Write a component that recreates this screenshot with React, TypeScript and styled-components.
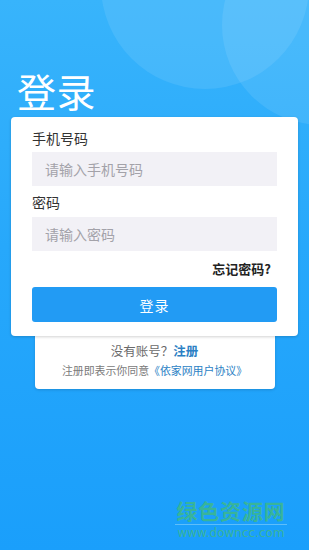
import React from 'react';
import styled, { createGlobalStyle } from 'styled-components';

const GlobalStyle = createGlobalStyle`
  html, body {
    margin: 0;
    padding: 0;
  }
  body {
    font-family: "Noto Sans CJK SC", "Noto Sans", sans-serif;
  }
  * {
    box-sizing: border-box;
  }
`;

const StyledPage = styled.div`
  position: relative;
  width: 309px;
  height: 550px;
  overflow: hidden;
  background: linear-gradient(180deg, #38b4fb 0%, #27a8fb 45%, #1a9ffb 100%);
  padding: 68px 11px 0 11px;
`;

const StyledCircle = styled.div<{ $x: number; $y: number; $r: number }>`
  position: absolute;
  left: ${(p) => p.$x - p.$r}px;
  top: ${(p) => p.$y - p.$r}px;
  width: ${(p) => p.$r * 2}px;
  height: ${(p) => p.$r * 2}px;
  border-radius: 50%;
  background: rgba(255, 255, 255, 0.09);
  pointer-events: none;
`;

const StyledContent = styled.div`
  position: relative;
  display: flex;
  flex-direction: column;
  align-items: center;
`;

const StyledTitle = styled.h1`
  align-self: flex-start;
  margin: 0 0 4px 6px;
  font-size: 39px;
  line-height: 45px;
  font-weight: 400;
  color: #fff;
  letter-spacing: 0.5px;
`;

const StyledCard = styled.div`
  position: relative;
  z-index: 2;
  width: 287px;
  background: #fff;
  border-radius: 4px;
  padding: 11px 21px 14px 21px;
  display: flex;
  flex-direction: column;
  box-shadow: 0 1px 3px rgba(0, 0, 0, 0.18);
`;

const StyledLabel = styled.div<{ $top?: number }>`
  font-size: 14px;
  line-height: 20px;
  color: #333;
  margin-top: ${(p) => p.$top ?? 0}px;
`;

const StyledInput = styled.input<{ $top: number }>`
  margin-top: ${(p) => p.$top}px;
  height: 34px;
  width: 100%;
  border: none;
  outline: none;
  background: #f2f1f6;
  padding: 0 13px;
  font-family: inherit;
  font-size: 14px;
  color: #333;
  &::placeholder {
    color: #a3a2a9;
  }
`;

const StyledForgot = styled.button`
  align-self: flex-end;
  margin: 8px 6px 0 0;
  padding: 0;
  border: none;
  background: transparent;
  font-family: inherit;
  font-size: 13px;
  line-height: 20px;
  font-weight: 700;
  color: #222;
`;

const StyledSubmit = styled.button`
  margin-top: 8px;
  height: 35px;
  width: 100%;
  border: none;
  border-radius: 3px;
  background: #229bf4;
  color: #fff;
  font-family: inherit;
  font-size: 14px;
  letter-spacing: 1px;
`;

const StyledFooterCard = styled.div`
  position: relative;
  z-index: 1;
  width: 240px;
  margin-top: -4px;
  background: #fff;
  border-radius: 0 0 4px 4px;
  padding: 9px 0 10px 0;
  text-align: center;
  box-shadow: 0 1px 3px rgba(0, 0, 0, 0.15);
`;

const StyledRegister = styled.div`
  font-size: 12.5px;
  line-height: 20px;
  color: #6a6a6a;
`;

const StyledTerms = styled.div`
  font-size: 10.9px;
  line-height: 18px;
  color: #7a7a7a;
  white-space: nowrap;
`;

const StyledLink = styled.span<{ $bold?: boolean }>`
  color: #2b7fc4;
  font-weight: ${(p) => (p.$bold ? 700 : 400)};
`;

const StyledWatermark = styled.div`
  position: absolute;
  left: 175px;
  top: 496px;
  width: 112px;
  display: flex;
  flex-direction: column;
  align-items: center;
  color: rgba(70, 190, 110, 0.7);
  pointer-events: none;
`;

const StyledMarkTitle = styled.div`
  font-size: 21px;
  line-height: 28px;
  font-weight: 700;
  letter-spacing: 0.8px;
  width: 100%;
  text-align: center;
  border-bottom: 1px solid rgba(140, 210, 250, 0.6);
`;

const StyledMarkUrl = styled.div`
  margin-top: 1px;
  font-family: "DejaVu Sans", sans-serif;
  font-size: 12px;
  line-height: 15px;
`;

function App() {
  return (
    <StyledPage>
      <GlobalStyle />
      <StyledCircle $x={205} $y={-15} $r={104} />
      <StyledCircle $x={322} $y={25} $r={100} />
      <StyledContent>
        <StyledTitle>登录</StyledTitle>
        <StyledCard>
          <StyledLabel>手机号码</StyledLabel>
          <StyledInput $top={4} placeholder="请输入手机号码" />
          <StyledLabel $top={6}>密码</StyledLabel>
          <StyledInput $top={5} type="password" placeholder="请输入密码" />
          <StyledForgot type="button">忘记密码?</StyledForgot>
          <StyledSubmit type="button">登录</StyledSubmit>
        </StyledCard>
        <StyledFooterCard>
          <StyledRegister>
            没有账号？<StyledLink $bold>注册</StyledLink>
          </StyledRegister>
          <StyledTerms>
            注册即表示你同意<StyledLink>《依家网用户协议》</StyledLink>
          </StyledTerms>
        </StyledFooterCard>
      </StyledContent>
      <StyledWatermark>
        <StyledMarkTitle>绿色资源网</StyledMarkTitle>
        <StyledMarkUrl>www.downcc.com</StyledMarkUrl>
      </StyledWatermark>
    </StyledPage>
  );
}

export default App;
